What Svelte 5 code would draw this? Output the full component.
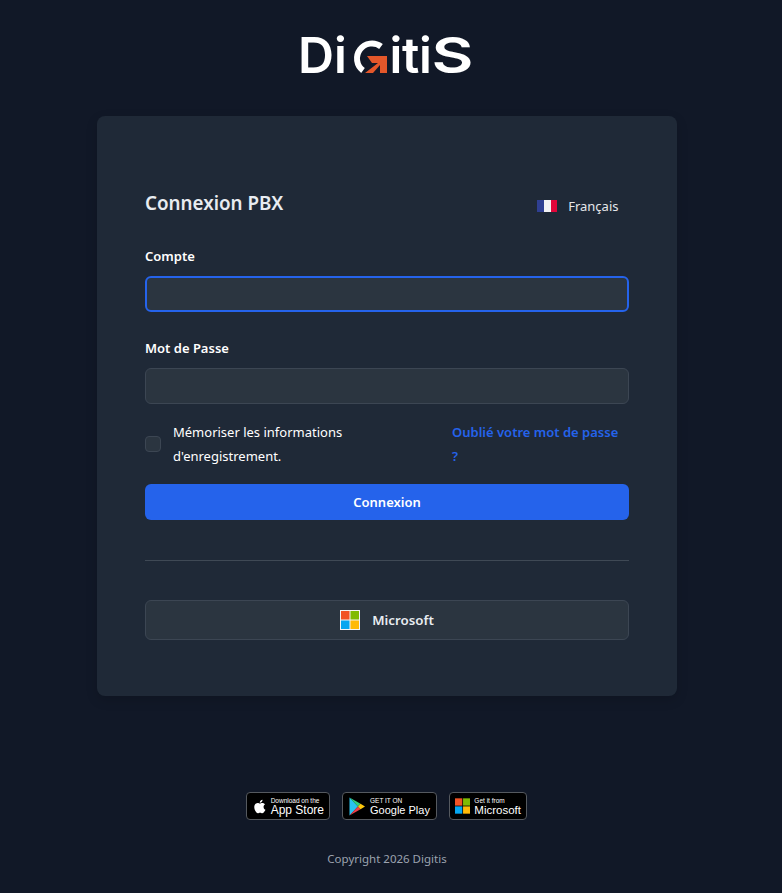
<script>
  const stores = [
    { id: "apple", small: "Download on the", big: "App Store" },
    { id: "play", small: "GET IT ON", big: "Google Play" },
    { id: "ms", small: "Get it from", big: "Microsoft" }
  ];
</script>

<div class="page">
  <!-- logo: the G is a drawn arc with the orange arrow -->
  <svg class="logo" viewBox="0 0 180 58" width="180" height="58" role="img" aria-label="Digitis">
    <g class="logo-text">
      <text x="1" y="46" textLength="36" lengthAdjust="spacingAndGlyphs">D</text>
      <text x="37" y="46">i</text>
      <text x="92.5" y="46">i</text>
      <text x="105" y="46">t</text>
      <text x="122" y="46">i</text>
      <text x="134.5" y="46" textLength="42" lengthAdjust="spacingAndGlyphs">S</text>
    </g>
    <path d="M66 43.5 A15 15 0 1 1 84 19.5" fill="none" stroke="#fff" stroke-width="6" />
    <path d="M70 29 H90 V46 H83 V38 L76 46 H68 L81 36 H75 Z" fill="#e4572a" />
  </svg>

  <div class="card">
    <div class="head">
      <h1>Connexion PBX</h1>
      <div class="lang">
        <span class="flag"><i class="blue"></i><i class="white"></i><i class="red"></i></span>
        <span>Français</span>
      </div>
    </div>

    <label class="field-label" for="account">Compte</label>
    <input id="account" class="input focused" type="text" />

    <label class="field-label second" for="pass">Mot de Passe</label>
    <input id="pass" class="input" type="password" />

    <div class="options">
      <div class="remember">
        <span class="check"></span>
        <span class="remember-text">Mémoriser les informations d'enregistrement.</span>
      </div>
      <a class="forgot" href="#top">Oublié votre mot de passe ?</a>
    </div>

    <button class="submit">Connexion</button>

    <div class="divider"></div>

    <button class="ms-btn">
      <svg width="20" height="20" viewBox="0 0 20 20">
        <rect width="20" height="20" fill="#f3f3f3" />
        <rect x="1" y="1" width="8.5" height="8.5" fill="#f25325" />
        <rect x="10.5" y="1" width="8.5" height="8.5" fill="#80bb03" />
        <rect x="1" y="10.5" width="8.5" height="8.5" fill="#05a6f0" />
        <rect x="10.5" y="10.5" width="8.5" height="8.5" fill="#ffba08" />
      </svg>
      <span>Microsoft</span>
    </button>
  </div>

  <div class="stores">
    {#each stores as s}
      <div class="badge {s.id}">
        {#if s.id === "apple"}
          <svg width="15" height="17" viewBox="0 0 24 24">
            <path fill="#fff" d="M12.152 6.896c-.948 0-2.415-1.078-3.96-1.04-2.04.027-3.91 1.183-4.961 3.014-2.117 3.675-.546 9.103 1.519 12.09 1.013 1.454 2.208 3.09 3.792 3.039 1.52-.065 2.09-.987 3.935-.987 1.831 0 2.35.987 3.96.948 1.637-.026 2.676-1.48 3.676-2.948 1.156-1.688 1.636-3.325 1.662-3.415-.039-.013-3.182-1.221-3.22-4.857-.026-3.04 2.48-4.494 2.597-4.559-1.429-2.09-3.623-2.324-4.39-2.376-2-.156-3.675 1.09-4.61 1.09zM15.53 3.83c.843-1.012 1.4-2.427 1.245-3.83-1.207.052-2.662.805-3.532 1.818-.78.896-1.454 2.338-1.273 3.714 1.338.104 2.715-.688 3.559-1.701" />
          </svg>
        {:else if s.id === "play"}
          <svg width="16" height="19" viewBox="0 0 16 19">
            <path d="M0.5 0.5 L9 9.5 L0.5 18.5 Z" fill="#2ac3f0" />
            <path d="M0.5 0.5 L11.5 6.8 L9 9.5 Z" fill="#35d07f" />
            <path d="M0.5 18.5 L11.5 12.2 L9 9.5 Z" fill="#ee3f4a" />
            <path d="M11.5 6.8 L16 9.5 L11.5 12.2 L9 9.5 Z" fill="#fdc70c" />
          </svg>
        {:else}
          <svg width="16" height="16" viewBox="0 0 16 16">
            <rect width="7.6" height="7.6" fill="#f25325" />
            <rect x="8.4" width="7.6" height="7.6" fill="#80bb03" />
            <rect y="8.4" width="7.6" height="7.6" fill="#05a6f0" />
            <rect x="8.4" y="8.4" width="7.6" height="7.6" fill="#ffba08" />
          </svg>
        {/if}
        <div class="badge-text">
          <span class="small">{s.small}</span>
          <span class="big">{s.big}</span>
        </div>
      </div>
    {/each}
  </div>

  <p class="copyright">Copyright 2026 Digitis</p>
</div>

<style>
  :global(body) {
    margin: 0;
    background: #111827;
  }

  .page {
    min-height: 893px;
    display: flex;
    flex-direction: column;
    align-items: center;
    font-family: "Noto Sans", "Open Sans", sans-serif;
    font-size: 13px;
    color: #fff;
    box-sizing: border-box;
    padding: 27px 8px 0 0;
  }

  .logo {
    display: block;
  }

  .logo-text text {
    font-family: Inter, "Liberation Sans", sans-serif;
    font-size: 49px;
    font-weight: 600;
    fill: #fff;
  }

  .card {
    width: 580px;
    box-sizing: border-box;
    margin-top: 31px;
    padding: 72px 48px 56px;
    background: #1f2937;
    border-radius: 8px;
    box-shadow: 0 4px 12px rgba(0, 0, 0, 0.15);
    display: flex;
    flex-direction: column;
  }

  .head {
    display: flex;
    justify-content: space-between;
    align-items: flex-start;
    height: 56px;
  }

  h1 {
    margin: 0;
    font-size: 18.8px;
    font-weight: 600;
    line-height: 30px;
    color: #e8ecf1;
  }

  .lang {
    display: flex;
    align-items: center;
    gap: 11px;
    margin-top: 7px;
    margin-right: 10.5px;
    line-height: 22px;
    color: #e5e7eb;
  }

  .flag {
    display: flex;
    width: 20px;
    height: 12px;
  }

  .flag i {
    flex: 1;
  }

  .blue { background: #2f3f92; }
  .white { background: #f2f2f4; }
  .red { background: #e1063a; }

  .field-label {
    display: block;
    font-weight: 600;
    line-height: 24px;
    margin-bottom: 8px;
  }

  .second {
    margin-top: 24px;
  }

  .input {
    display: block;
    width: 100%;
    height: 36px;
    box-sizing: border-box;
    background: #2b3540;
    border: 1px solid #3c4653;
    border-radius: 6px;
    outline: none;
    padding: 0 12px;
    color: #fff;
  }

  .focused {
    border: 2px solid #2563eb;
  }

  .options {
    display: flex;
    justify-content: space-between;
    margin-top: 16px;
    line-height: 24px;
  }

  .remember {
    display: flex;
    align-items: center;
    gap: 12px;
    width: 212px;
  }

  .check {
    flex: none;
    width: 16px;
    height: 16px;
    box-sizing: border-box;
    background: #2b3540;
    border: 1px solid #3c4653;
    border-radius: 4px;
  }

  .forgot {
    width: 177px;
    padding-right: 7px;
    box-sizing: border-box;
    color: #2563eb;
    font-weight: 600;
    text-decoration: none;
  }

  .submit {
    margin-top: 16px;
    height: 36px;
    border: none;
    border-radius: 6px;
    background: #2563eb;
    color: #fff;
    font: 600 13px "Noto Sans", sans-serif;
  }

  .divider {
    margin: 40px 0 39px;
    height: 1px;
    background: #3f4955;
  }

  .ms-btn {
    height: 40px;
    display: flex;
    align-items: center;
    justify-content: center;
    gap: 12px;
    background: #2b3540;
    border: 1px solid #3c4653;
    border-radius: 6px;
    color: #e8ecf1;
    font: 600 13.3px "Noto Sans", sans-serif;
  }

  .stores {
    display: flex;
    gap: 12px;
    margin-top: 96px;
    margin-right: 1px;
  }

  .badge {
    height: 28px;
    box-sizing: border-box;
    display: flex;
    align-items: center;
    gap: 4px;
    padding: 0 5px 0 6px;
    background: #000;
    border: 1px solid #55595f;
    border-radius: 4px;
  }

  .apple { width: 84px; }
  .play { width: 95px; gap: 5px; }
  .ms { width: 78px; padding-left: 5px; }

  .badge-text {
    display: flex;
    flex-direction: column;
    font-family: "Liberation Sans", sans-serif;
    white-space: nowrap;
  }

  .small {
    font-size: 6.5px;
    line-height: 7px;
  }

  .big {
    font-size: 12px;
    line-height: 12px;
  }

  .play .big {
    font-size: 11px;
  }

  .ms .big {
    font-size: 11.5px;
  }

  .copyright {
    margin: 30px 0 0;
    font-size: 11.5px;
    line-height: 18px;
    color: #9ca3af;
  }
</style>
